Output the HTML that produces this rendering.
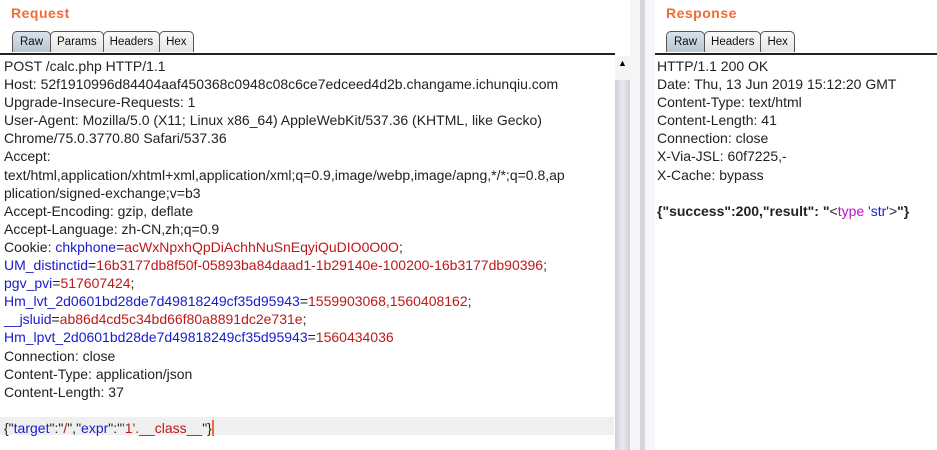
<!DOCTYPE html>
<html><head><style>
body{margin:0;width:937px;height:450px;background:#fff;font-family:"Liberation Sans",sans-serif;position:relative;overflow:hidden}
.title{position:absolute;top:5px;color:#f26b36;font-weight:bold;font-size:14px;letter-spacing:.5px}
.tabs{position:absolute;top:31px;height:22px;display:flex}
.tab{height:20px;border:1px solid #555;border-bottom:none;border-radius:5px 5px 0 0;background:linear-gradient(#fafafa,#e4e4e4);font-size:11.5px;line-height:21px;padding:0 6px;margin-right:-1px;color:#111}
.tab.sel{background:linear-gradient(#d8e2ec,#b7c6d4)}
.line{position:absolute;top:53px;height:2px;background:#222}
.txt{position:absolute;top:57px;font-size:14px;line-height:18.1px;color:#222;white-space:pre}
.b{color:#1a1acc}.r{color:#c01818}.m{color:#c010c0}
</style></head><body>
<div class="title" style="left:11px">Request</div>
<div class="tabs" style="left:12px"><div class="tab sel" style="padding:0 7px">Raw</div><div class="tab">Params</div><div class="tab">Headers</div><div class="tab">Hex</div></div>
<div class="line" style="left:0;width:615px"></div>
<div style="position:absolute;left:0;top:417px;width:614px;height:18px;background:#efefef"></div>
<div class="txt" style="left:4px">POST /calc.php HTTP/1.1
Host: 52f1910996d84404aaf450368c0948c08c6ce7edceed4d2b.changame.ichunqiu.com
Upgrade-Insecure-Requests: 1
User-Agent: Mozilla/5.0 (X11; Linux x86_64) AppleWebKit/537.36 (KHTML, like Gecko)
Chrome/75.0.3770.80 Safari/537.36
Accept:
text/html,application/xhtml+xml,application/xml;q=0.9,image/webp,image/apng,*/*;q=0.8,ap
plication/signed-exchange;v=b3
Accept-Encoding: gzip, deflate
Accept-Language: zh-CN,zh;q=0.9
Cookie: <span class="b">chkphone</span>=<span class="r">acWxNpxhQpDiAchhNuSnEqyiQuDIO0O0O</span>;
<span class="b">UM_distinctid</span>=<span class="r">16b3177db8f50f-05893ba84daad1-1b29140e-100200-16b3177db90396</span>;
<span class="b">pgv_pvi</span>=<span class="r">517607424</span>;
<span class="b">Hm_lvt_2d0601bd28de7d49818249cf35d95943</span>=<span class="r">1559903068,1560408162</span>;
<span class="b">__jsluid</span>=<span class="r">ab86d4cd5c34bd66f80a8891dc2e731e</span>;
<span class="b">Hm_lpvt_2d0601bd28de7d49818249cf35d95943</span>=<span class="r">1560434036</span>
Connection: close
Content-Type: application/json
Content-Length: 37

{"<span class="b">target</span>":"<span class="r">/</span>","<span class="b">expr</span>":"<span class="r">'1'.__class__</span>"}<span style="border-left:2px solid #f26b36"></span></div>
<div style="position:absolute;left:615px;top:56px;width:15px;height:394px;background:linear-gradient(90deg,#cdd0d6,#e8eaee,#cdd0d6)"></div>
<div style="position:absolute;left:615px;top:56px;width:15px;height:24px;background:#f4f4f4;font-size:9px;text-align:center;line-height:14px">▲</div>
<div style="position:absolute;left:630px;top:0;width:10px;height:450px;background:#f6f6f8"></div>
<div style="position:absolute;left:640px;top:0;width:5px;height:450px;background:#d2d5da"></div>
<div style="position:absolute;left:645px;top:0;width:10px;height:450px;background:#f6f6f8"></div>
<div class="title" style="left:666px">Response</div>
<div class="tabs" style="left:666px"><div class="tab sel" style="padding:0 7px">Raw</div><div class="tab">Headers</div><div class="tab">Hex</div></div>
<div class="line" style="left:655px;width:282px"></div>
<div class="txt" style="left:657px">HTTP/1.1 200 OK
Date: Thu, 13 Jun 2019 15:12:20 GMT
Content-Type: text/html
Content-Length: 41
Connection: close
X-Via-JSL: 60f7225,-
X-Cache: bypass

<b>{"success":200,"result": "</b>&lt;<span class="m">type</span> <span class="b">'str'</span>&gt;<b>"}</b></div>
</body></html>
